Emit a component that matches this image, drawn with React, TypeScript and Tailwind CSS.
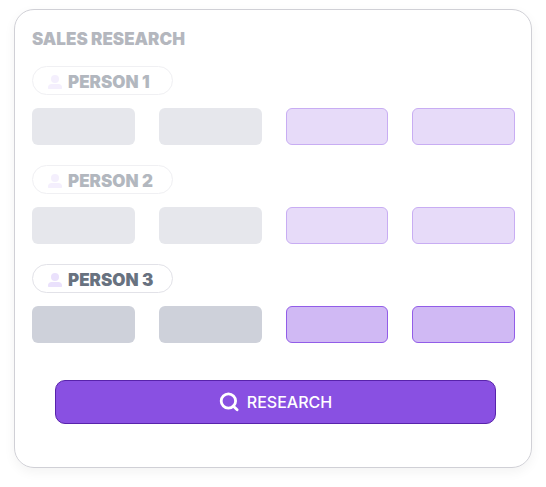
import React from 'react';

interface Person {
  name: string;
  active: boolean;
}

const people: Person[] = [
  { name: 'PERSON 1', active: false },
  { name: 'PERSON 2', active: false },
  { name: 'PERSON 3', active: true },
];

const PersonIcon: React.FC<{ className: string }> = ({ className }) => (
  <svg className={className} viewBox="0 0 14 14" fill="currentColor" aria-hidden="true">
    <circle cx="7" cy="4" r="4" />
    <path d="M3.6 9h6.8C12.6 9 14 10.6 14 12.3V13c0 .6-.4 1-1 1H1c-.6 0-1-.4-1-1v-.7C0 10.6 1.4 9 3.6 9z" />
  </svg>
);

const SearchIcon: React.FC = () => (
  <svg className="h-5 w-5" viewBox="0 0 20 20" fill="none" stroke="currentColor" strokeWidth="2.8" aria-hidden="true">
    <circle cx="9.4" cy="9" r="7.2" />
    <path d="M14.2 14l3.9 3.8" strokeLinecap="round" />
  </svg>
);

const PersonRow: React.FC<{ person: Person }> = ({ person }) => (
  // Only the current person is shown at full strength
  <section className={person.active ? '' : 'opacity-50'}>
    <h3 className="flex h-[29px] w-[141px] items-center gap-1.5 rounded-full border border-[#e2e2e8] pt-0.5 pl-[15px] text-[17px] leading-7 font-black text-[#687280]">
      <PersonIcon className="h-3.5 w-3.5 shrink-0 text-[#eae1fc]" />
      {person.name}
    </h3>
    <div className="mt-[13px] grid grid-cols-4 gap-6">
      <div className="h-[37px] rounded-md bg-[#ced1da]" />
      <div className="h-[37px] rounded-md bg-[#ced1da]" />
      <div className="h-[37px] rounded-md border border-[#925de8] bg-[#d0b9f4]" />
      <div className="h-[37px] rounded-md border border-[#925de8] bg-[#d0b9f4]" />
    </div>
  </section>
);

const App: React.FC = () => (
  <main className="bg-white px-3.5 pt-[9px] pb-5 font-['Inter',sans-serif]">
    <div className="rounded-[20px] border border-[#d0d0d6] px-4 pt-[15px] pb-[43px] pl-[17px] shadow-[0_4px_12px_rgba(0,0,0,0.05)]">
      <h2 className="text-[17px] leading-7 font-black text-[#b4b7be]">SALES RESEARCH</h2>
      <div className="mt-[13px] flex flex-col gap-5">
        {people.map((person) => (
          <PersonRow key={person.name} person={person} />
        ))}
      </div>
      <div className="mt-[37px] pr-[19px] pl-[23px]">
        <button
          type="button"
          className="flex h-11 w-full items-center justify-center gap-2 rounded-[10px] border border-[#5823ab] bg-[#8950e2] text-base font-medium text-white"
        >
          <SearchIcon />
          RESEARCH
        </button>
      </div>
    </div>
  </main>
);

export default App;
